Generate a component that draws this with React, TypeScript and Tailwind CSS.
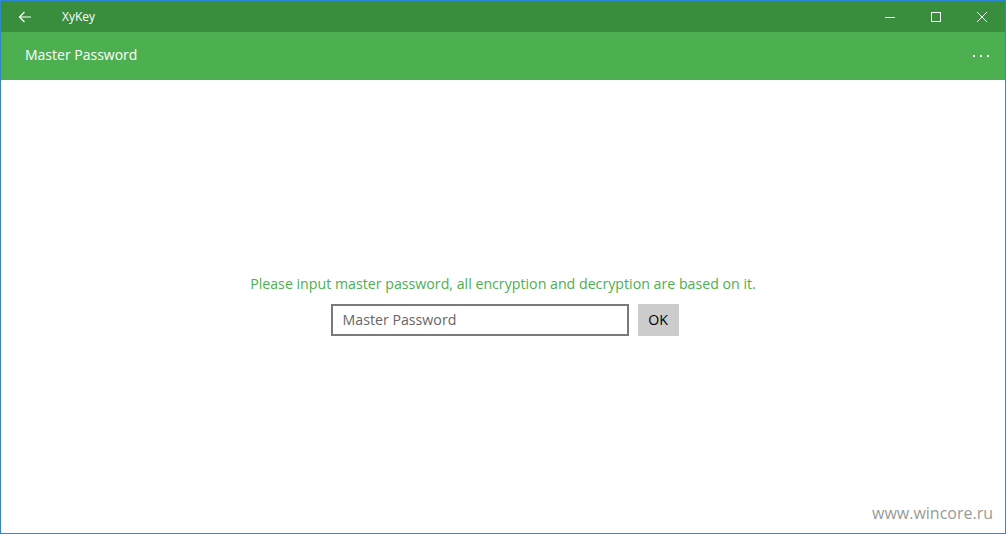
import { useState } from "react";

const font = { fontFamily: '"Open Sans", "Noto Sans", sans-serif' };

const TitleBar = () => {
  return (
    <div className="flex h-[31px] items-center bg-[#388e3c] text-white">
      <button className="flex h-full w-[48px] items-center justify-center">
        <svg width="14" height="12" viewBox="0 0 14 12" fill="none" stroke="white" strokeWidth="1.2">
          <path d="M13 6H1.5M6.5 1L1.5 6l5 5" />
        </svg>
      </button>
      <span className="ml-[13px] text-[12px]">XyKey</span>
      <div className="ml-auto flex h-full">
        <button className="flex h-full w-[46px] items-center justify-center">
          <svg width="10" height="10" viewBox="0 0 10 10" stroke="white" strokeWidth="1">
            <path d="M0 5.5h10" />
          </svg>
        </button>
        <button className="flex h-full w-[46px] items-center justify-center">
          <svg width="10" height="10" viewBox="0 0 10 10" fill="none" stroke="white" strokeWidth="1">
            <rect x="0.5" y="0.5" width="9" height="9" />
          </svg>
        </button>
        <button className="flex h-full w-[46px] items-center justify-center">
          <svg width="10" height="10" viewBox="0 0 10 10" stroke="white" strokeWidth="1">
            <path d="M0 0l10 10M10 0L0 10" />
          </svg>
        </button>
      </div>
    </div>
  );
};

const Header = () => {
  return (
    <div className="flex h-[48px] items-center bg-[#4caf50] pb-[3px] pl-[24px] text-white">
      <span className="text-[14px]">Master Password</span>
      <div className="ml-auto flex w-[48px] items-center justify-center gap-[5px] pt-[3px]">
        <span className="h-[2px] w-[2px] bg-white" />
        <span className="h-[2px] w-[2px] bg-white" />
        <span className="h-[2px] w-[2px] bg-white" />
      </div>
    </div>
  );
};

export default function App() {
  const [password, setPassword] = useState("");

  return (
    <div
      className="flex h-[534px] w-[1006px] flex-col overflow-hidden border border-[#2b88d8] bg-white"
      style={font}
    >
      <TitleBar />
      <Header />
      <div className="relative flex flex-1 flex-col items-center justify-center pb-[4px]">
        <p className="text-[14.2px] text-[#4caf50]">
          Please input master password, all encryption and decryption are based on it.
        </p>
        <div className="ml-[3px] mt-[9px] flex gap-[9px]">
          <input
            type="password"
            value={password}
            onChange={(e) => setPassword(e.target.value)}
            placeholder="Master Password"
            className="h-[32px] w-[298px] border-2 border-[#7a7a7a] px-[10px] text-[14.2px] text-black outline-none placeholder:text-[#666]"
          />
          <button className="h-[32px] w-[41px] bg-[#cccccc] text-[14.2px] text-black">OK</button>
        </div>
        <span className="absolute bottom-[8px] right-[12px] text-[16px] text-[#9a9a9a]">
          www.wincore.ru
        </span>
      </div>
    </div>
  );
}
